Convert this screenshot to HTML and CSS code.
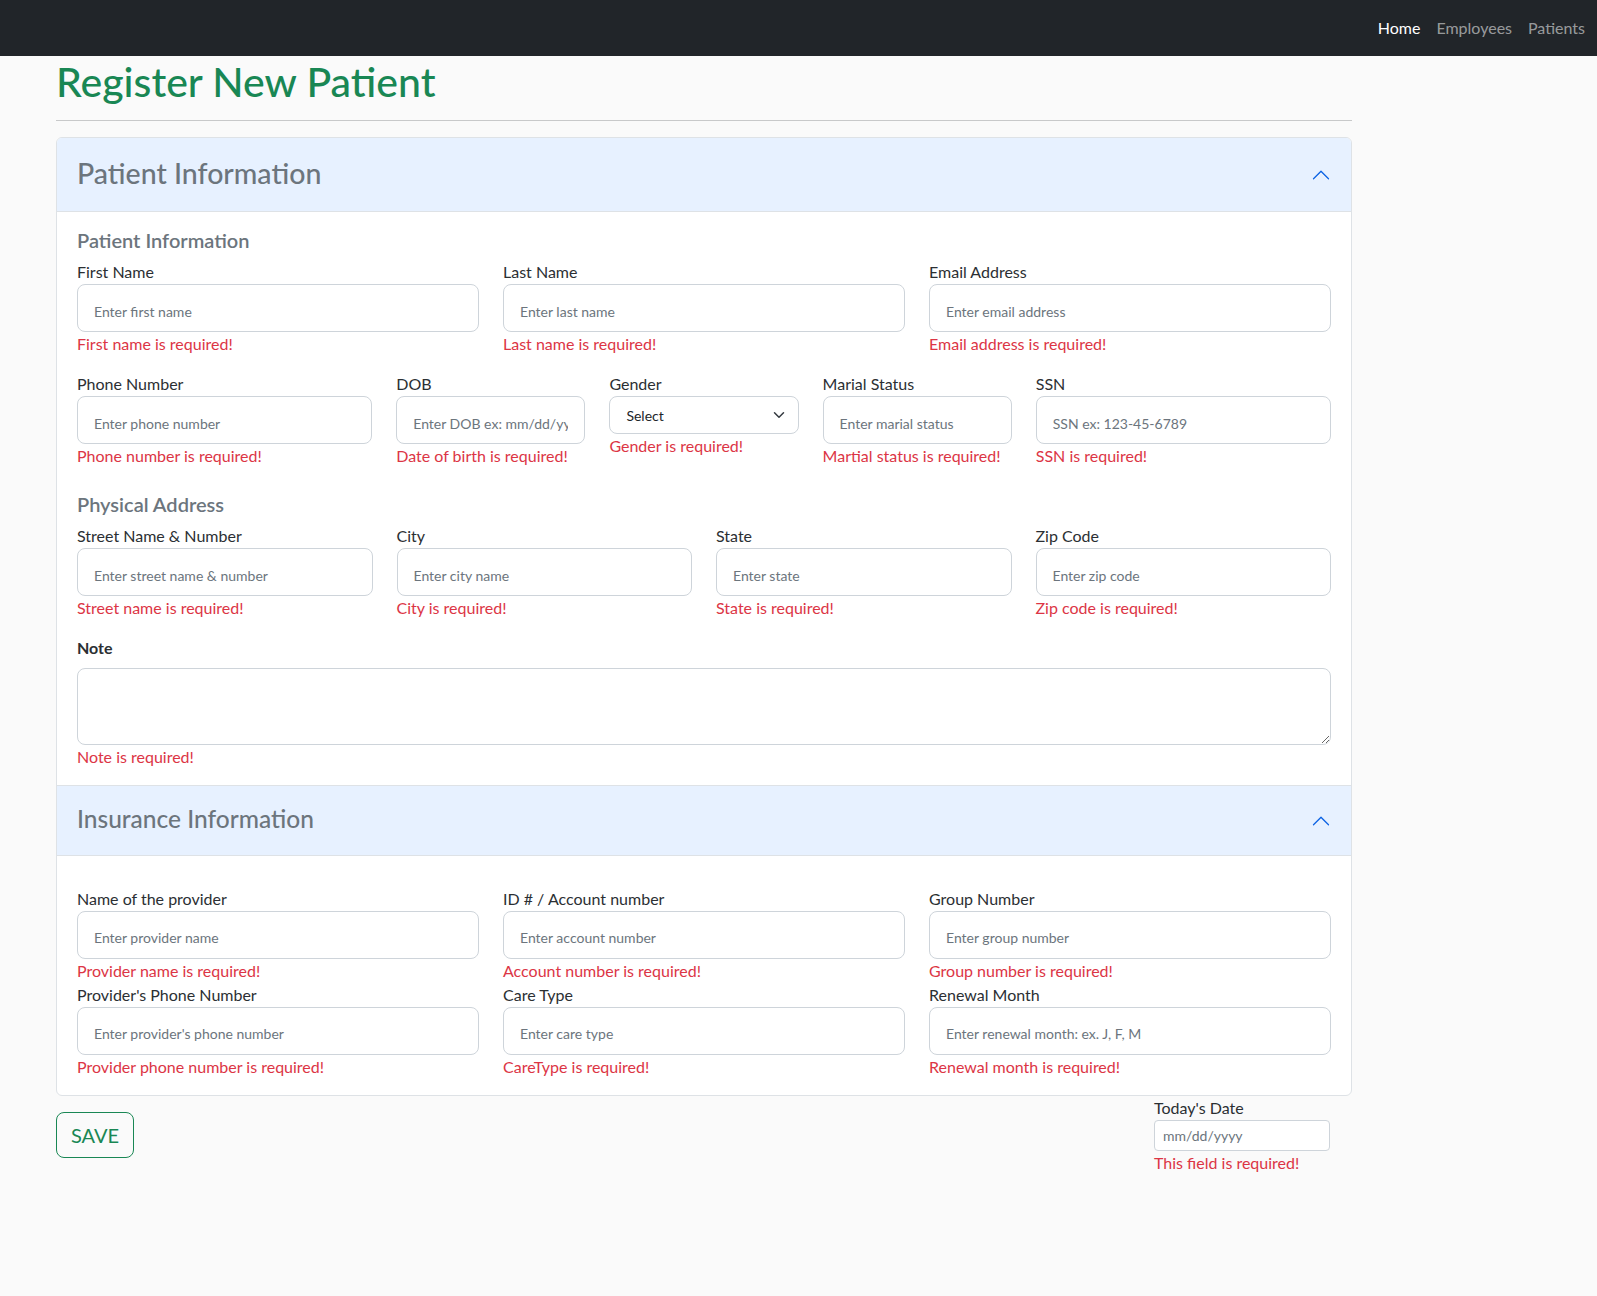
FILE: index.html
```html
<!DOCTYPE html>
<html lang="en">
<head>
<meta charset="utf-8">
<title>Register New Patient</title>
<link rel="stylesheet" href="styles.css">
</head>
<body>
<nav class="navbar">
  <ul class="nav-links">
    <li><a href="#" class="active">Home</a></li>
    <li><a href="#">Employees</a></li>
    <li><a href="#">Patients</a></li>
  </ul>
</nav>
<main class="page">
  <h1 class="page-title">Register New Patient</h1>
  <hr class="divider">
  <div class="accordion">
    <section class="acc-item">
      <div class="acc-header">
        <h3 class="acc-title acc-title-lg">Patient Information</h3>
        <svg class="acc-icon" viewBox="0 0 16 16"><path fill="#0c63e4" d="M1.646 11.354a.5.5 0 0 0 .708 0L8 5.707l5.646 5.647a.5.5 0 0 0 .708-.708l-6-6a.5.5 0 0 0-.708 0l-6 6a.5.5 0 0 0 0 .708z"/></svg>
      </div>
      <div class="acc-body">
        <h5 class="sub-heading">Patient Information</h5>
        <div class="grid grid-3">
          <div class="field"><label class="label">First Name</label><input class="input" placeholder="Enter first name"><div class="error">First name is required!</div></div>
          <div class="field"><label class="label">Last Name</label><input class="input" placeholder="Enter last name"><div class="error">Last name is required!</div></div>
          <div class="field"><label class="label">Email Address</label><input class="input" placeholder="Enter email address"><div class="error">Email address is required!</div></div>
        </div>
        <div class="grid grid-5">
          <div class="field"><label class="label">Phone Number</label><input class="input" placeholder="Enter phone number"><div class="error">Phone number is required!</div></div>
          <div class="field"><label class="label">DOB</label><input class="input" placeholder="Enter DOB ex: mm/dd/yyyy"><div class="error">Date of birth is required!</div></div>
          <div class="field"><label class="label">Gender</label>
            <div class="select-wrap">
              <select class="select"><option>Select</option><option>Male</option><option>Female</option></select>
              <svg class="select-icon" viewBox="0 0 16 16"><path fill="none" stroke="#343a40" stroke-linecap="round" stroke-linejoin="round" stroke-width="2" d="m2 5 6 6 6-6"/></svg>
            </div>
            <div class="error">Gender is required!</div></div>
          <div class="field"><label class="label">Marial Status</label><input class="input" placeholder="Enter marial status"><div class="error">Martial status is required!</div></div>
          <div class="field"><label class="label">SSN</label><input class="input" placeholder="SSN ex: 123-45-6789"><div class="error">SSN is required!</div></div>
        </div>
        <h5 class="sub-heading sub-heading-spaced">Physical Address</h5>
        <div class="grid grid-4">
          <div class="field"><label class="label">Street Name &amp; Number</label><input class="input" placeholder="Enter street name &amp; number"><div class="error">Street name is required!</div></div>
          <div class="field"><label class="label">City</label><input class="input" placeholder="Enter city name"><div class="error">City is required!</div></div>
          <div class="field"><label class="label">State</label><input class="input" placeholder="Enter state"><div class="error">State is required!</div></div>
          <div class="field"><label class="label">Zip Code</label><input class="input" placeholder="Enter zip code"><div class="error">Zip code is required!</div></div>
        </div>
        <div class="note">
          <label class="label label-bold">Note</label>
          <textarea class="textarea"></textarea>
          <div class="error">Note is required!</div>
        </div>
      </div>
    </section>
    <section class="acc-item">
      <div class="acc-header">
        <h4 class="acc-title acc-title-md">Insurance Information</h4>
        <svg class="acc-icon" viewBox="0 0 16 16"><path fill="#0c63e4" d="M1.646 11.354a.5.5 0 0 0 .708 0L8 5.707l5.646 5.647a.5.5 0 0 0 .708-.708l-6-6a.5.5 0 0 0-.708 0l-6 6a.5.5 0 0 0 0 .708z"/></svg>
      </div>
      <div class="acc-body acc-body-ins">
        <div class="grid grid-3">
          <div><label class="label">Name of the provider</label><input class="input" placeholder="Enter provider name"><div class="error">Provider name is required!</div></div>
          <div><label class="label">ID # / Account number</label><input class="input" placeholder="Enter account number"><div class="error">Account number is required!</div></div>
          <div><label class="label">Group Number</label><input class="input" placeholder="Enter group number"><div class="error">Group number is required!</div></div>
          <div><label class="label">Provider's Phone Number</label><input class="input" placeholder="Enter provider's phone number"><div class="error">Provider phone number is required!</div></div>
          <div><label class="label">Care Type</label><input class="input" placeholder="Enter care type"><div class="error">CareType is required!</div></div>
          <div><label class="label">Renewal Month</label><input class="input" placeholder="Enter renewal month: ex. J, F, M"><div class="error">Renewal month is required!</div></div>
        </div>
      </div>
    </section>
  </div>
  <div class="footer-row">
    <button class="btn-save" type="button">SAVE</button>
    <div class="date-field">
      <label class="label">Today's Date</label>
      <input class="input-sm" placeholder="mm/dd/yyyy">
      <div class="error">This field is required!</div>
    </div>
  </div>
</main>
</body>
</html>
```
FILE: styles.css
```css
* { box-sizing: border-box; }
html, body { margin: 0; }
body {
  font-family: Lato, "Noto Sans", sans-serif;
  font-size: 16px;
  line-height: 1.5;
  color: #212529;
  background: #fafafa;
}
.navbar {
  height: 56px;
  background: #212529;
  display: flex;
  justify-content: flex-end;
  align-items: center;
  padding-right: 12px;
}
.nav-links {
  list-style: none;
  margin: 0;
  padding: 0;
  display: flex;
  gap: 16px;
}
.nav-links a {
  color: rgba(255, 255, 255, 0.55);
  text-decoration: none;
}
.nav-links a.active { color: #fff; }
.page {
  width: 1296px;
  margin-left: 56px;
  padding-bottom: 100px;
}
.page-title {
  margin: 0;
  padding-top: 3px;
  font-size: 41px;
  line-height: 45px;
  font-weight: 500;
  color: #198754;
}
.divider {
  margin: 16px 0;
  border: 0;
  border-top: 1px solid #c8c9ca;
}
.accordion {
  background: #fff;
  border: 1px solid #dee2e6;
  border-radius: 6px;
  overflow: hidden;
}
.acc-item + .acc-item { border-top: 1px solid #dee2e6; }
.acc-header {
  display: flex;
  align-items: center;
  justify-content: space-between;
  padding: 16px 20px;
  background: #e7f1ff;
  box-shadow: inset 0 -1px 0 #dee2e6;
}
.acc-title {
  margin: 0 0 6px;
  padding-top: 2px;
  line-height: 1.2;
  font-weight: 500;
  color: #6c757d;
}
.acc-title-lg { font-size: 28.5px; }
.acc-title-md { font-size: 24.5px; }
.acc-icon { width: 20px; height: 20px; flex-shrink: 0; }
.acc-body { padding: 16px 20px; }
.acc-body-ins { padding-top: 31px; }
.sub-heading {
  margin: 0 0 8px;
  font-size: 20px;
  line-height: 24px;
  font-weight: 600;
  color: #6c757d;
}
.sub-heading-spaced { margin-top: 8px; }
.grid {
  display: grid;
  column-gap: 24px;
  align-items: start;
}
.grid-3 { grid-template-columns: repeat(3, 1fr); }
.grid-4 { grid-template-columns: repeat(4, 1fr); }
.grid-5 { grid-template-columns: 295fr 189fr 189fr 189fr 295fr; }
.field { margin-bottom: 16px; }
.label {
  display: block;
  font-size: 16px;
  line-height: 24px;
  color: #2b2f33;
}
.label-bold { font-weight: 700; margin-bottom: 8px; }
.input, .textarea, .select, .input-sm {
  display: block;
  width: 100%;
  font-family: inherit;
  color: #212529;
  background: #fff;
  border: 1px solid #ced4da;
  outline: none;
}
.input {
  height: 48px;
  padding: 15px 16px 9px;
  font-size: 14px;
  line-height: 21px;
  border-radius: 8px;
}
.input::placeholder, .textarea::placeholder, .input-sm::placeholder { color: #6c757d; opacity: 1; }
.select-wrap { position: relative; }
.select {
  appearance: none;
  -webkit-appearance: none;
  height: 38px;
  padding: 6px 36px 6px 16px;
  font-size: 14px;
  border-radius: 8px;
}
.select-icon {
  position: absolute;
  right: 12px;
  top: 13px;
  width: 16px;
  height: 12px;
  pointer-events: none;
}
.textarea {
  height: 77px;
  padding: 6px 12px;
  font-size: 14px;
  border-radius: 8px;
  resize: vertical;
}
.error {
  font-size: 16px;
  line-height: 24px;
  color: #dc3545;
}
.footer-row {
  display: flex;
  justify-content: space-between;
  align-items: flex-start;
  padding-right: 22px;
}
.btn-save {
  margin-top: 16px;
  font-family: inherit;
  font-size: 20px;
  line-height: 1.5;
  padding: 7px 14px;
  color: #198754;
  background: transparent;
  border: 1px solid #198754;
  border-radius: 8px;
}
.date-field { width: 176px; }
.input-sm {
  height: 31px;
  padding: 4px 8px;
  font-size: 14px;
  border-radius: 4px;
}
```
